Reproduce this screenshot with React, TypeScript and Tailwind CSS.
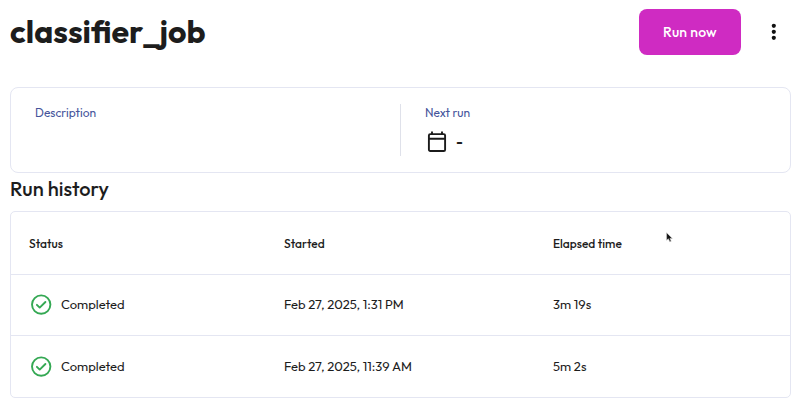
const runs = [
  { status: 'Completed', started: 'Feb 27, 2025, 1:31 PM', elapsed: '3m 19s' },
  { status: 'Completed', started: 'Feb 27, 2025, 11:39 AM', elapsed: '5m 2s' },
];

function CheckCircle() {
  return (
    <svg className="block size-6 shrink-0" viewBox="0 0 24 24" fill="none" stroke="#34a853" strokeWidth="1.9">
      <circle cx="12.2" cy="11.6" r="9.2" />
      <path d="m7.9 11.8 2.8 2.8 5.7-5.6" strokeLinecap="round" strokeLinejoin="round" />
    </svg>
  );
}

function CalendarIcon() {
  return (
    <svg className="block h-[21px] w-[20px] shrink-0" viewBox="0 0 20 21" fill="none" stroke="#1b1b1b" strokeWidth="1.9">
      <rect x="1.9" y="3.1" width="16.2" height="16.9" rx="1.3" />
      <path d="M2 7.8h16M5 .6V3M15 .6V3" />
    </svg>
  );
}

function MoreIcon() {
  return (
    <svg className="block h-[18px] w-[6px]" viewBox="0 0 6 18" fill="#111">
      <circle cx="2.8" cy="2.8" r="2.1" />
      <circle cx="2.8" cy="8.8" r="2.1" />
      <circle cx="2.8" cy="14.8" r="2.1" />
    </svg>
  );
}

export default function App() {
  return (
    <div className="h-[408px] w-[800px] overflow-hidden bg-white pr-[9px] pl-[10px] font-['Outfit','Lato',sans-serif] text-[#1d1d1d]">
      <header className="flex h-[87px] items-start pt-[9px]">
        <h1 className="flex-1 text-[32px] leading-[44px] font-bold whitespace-nowrap">classifier_job</h1>
        <button className="h-[46px] w-[102px] rounded-lg bg-[#cf2bc2] text-[14px] font-medium tracking-[0.2px] whitespace-nowrap text-white">
          Run now
        </button>
        <button aria-label="More actions" className="mt-[14px] mr-[14px] ml-[30px]">
          <MoreIcon />
        </button>
      </header>

      <section className="flex h-[86px] rounded-lg border border-[#e4e6f2] py-4">
        <div className="w-[390px] border-r border-[#dfe1ea] pl-6">
          <p className="text-[12px] leading-[17px] text-[#46559b]">Description</p>
        </div>
        <div className="pl-6">
          <p className="text-[12px] leading-[17px] text-[#46559b]">Next run</p>
          <div className="mt-[10px] flex items-center gap-[9px] pl-[2px]">
            <CalendarIcon />
            <span className="text-[15px] leading-[21px] font-semibold">-</span>
          </div>
        </div>
      </section>

      <h2 className="h-[38px] text-[20px] leading-[31px] font-medium whitespace-nowrap">Run history</h2>

      <section className="h-[187px] rounded-[5px] border border-[#e4e6f2]">
        <div className="grid h-[63px] grid-cols-[255px_269px_1fr] items-center border-b border-[#e4e6f2] pt-px pl-[18px] text-[12px] font-medium">
          <span>Status</span>
          <span>Started</span>
          <div className="flex items-center">
            <span className="w-[113px]">Elapsed time</span>
            <svg className="-mt-[12px] h-[11px] w-[7px]" viewBox="0 0 7 11">
              <path d="M.6.7v7.6l1.8-1.5 1.4 3 1.4-.6L3.9 6.4h2.4Z" fill="#111" stroke="#ccc" strokeWidth=".6" />
            </svg>
          </div>
        </div>
        {runs.map((run) => (
          <div
            key={run.started}
            className="grid h-[61px] grid-cols-[255px_269px_1fr] items-center border-b border-[#e4e6f2] pl-[18px] text-[13px] whitespace-nowrap last:border-b-0"
          >
            <div className="flex items-center gap-2">
              <CheckCircle />
              <span>{run.status}</span>
            </div>
            <span>{run.started}</span>
            <span>{run.elapsed}</span>
          </div>
        ))}
      </section>
    </div>
  );
}
